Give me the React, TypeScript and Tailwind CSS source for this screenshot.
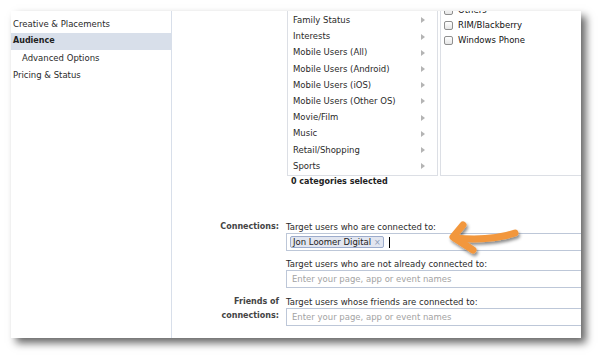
import React from 'react';

const categories = [
  'Family Status',
  'Interests',
  'Mobile Users (All)',
  'Mobile Users (Android)',
  'Mobile Users (iOS)',
  'Mobile Users (Other OS)',
  'Movie/Film',
  'Music',
  'Retail/Shopping',
  'Sports',
];

const mobileOs = ['Others', 'RIM/Blackberry', 'Windows Phone'];

const Caret = () => (
  <svg width="4" height="6" viewBox="0 0 4 6" className="shrink-0">
    <path d="M0 0 L4 3 L0 6 Z" fill="#b4b4b4" />
  </svg>
);

const Checkbox = () => (
  <span className="w-[9px] h-[9px] shrink-0 rounded-[2px] border border-[#8f8f8f] bg-gradient-to-b from-white to-[#e6e6e6]" />
);

const TextField = ({ placeholder }: { placeholder: string }) => (
  <div className="w-[320px] h-[18px] border border-[#bdc7d8] bg-white flex items-center pl-[5px] text-[#a3a3a3] leading-[12px]">
    {placeholder}
  </div>
);

const Arrow = () => (
  <svg
    width="84"
    height="42"
    viewBox="0 0 84 42"
    className="absolute left-[431px] top-[209px]"
  >
    <defs>
      <filter id="sh" x="-20%" y="-30%" width="150%" height="180%">
        <feDropShadow dx="1.5" dy="2.5" stdDeviation="1.4" floodColor="#000" floodOpacity="0.45" />
      </filter>
    </defs>
    <g
      filter="url(#sh)"
      fill="none"
      stroke="#f2973d"
      strokeWidth="7"
      strokeLinecap="round"
      strokeLinejoin="round"
    >
      <path d="M13 18 C 35 20, 55 19, 73 13" />
      <path d="M21 5 L 11 17 L 31 30" />
    </g>
  </svg>
);

export default function App() {
  return (
    <div className="w-[600px] h-[357px] bg-white overflow-hidden pt-[11px] pl-[11px] font-['DejaVu_Sans',sans-serif] text-[8.5px] text-[#2a2a2a]">
      <div className="relative w-[570px] h-[327px] bg-white shadow-[5px_5px_8px_rgba(0,0,0,0.6)] flex">
        {/* Sidebar */}
        <div className="w-[161px] shrink-0 border-r border-[#d8dfea] pt-[4.5px]">
          <div className="h-[17px] flex items-center pl-[2px]">Creative &amp; Placements</div>
          <div className="h-[17px] flex items-center pl-[2px] bg-[#d8dfea] font-bold text-[8px] text-[#222]">
            Audience
          </div>
          <div className="h-[17px] flex items-center pl-[11px]">Advanced Options</div>
          <div className="h-[17px] flex items-center pl-[2px]">Pricing &amp; Status</div>
        </div>

        {/* Main */}
        <div className="flex-1 overflow-hidden">
          <div className="flex -mt-[17px]">
            <div className="w-[115px] shrink-0" />
            <div className="flex-1">
              <div className="flex">
                <div className="w-[151px] shrink-0 border border-[#dcdfe5] pt-[17.4px] pb-[1px]">
                  {categories.map((c) => (
                    <div key={c} className="h-[16.2px] flex items-center justify-between pl-[5px] pr-[12px]">
                      <span>{c}</span>
                      <Caret />
                    </div>
                  ))}
                </div>
                <div className="w-[200px] shrink-0 ml-[2px] border border-[#dcdfe5] pt-[8px]">
                  {mobileOs.map((o) => (
                    <div key={o} className="h-[15px] flex items-center pl-[3px] gap-[5px] text-[#111]">
                      <Checkbox />
                      <span>{o}</span>
                    </div>
                  ))}
                </div>
              </div>
              <div className="leading-[12px] font-bold text-[8px] pl-[4px] text-[#222]">0 categories selected</div>
            </div>
          </div>

          {/* Connections */}
          <div className="flex mt-[32px]">
            <div className="w-[114px] shrink-0 pr-[7px] text-right font-bold text-[8px] leading-[14px] text-[#444]">
              Connections:
            </div>
            <div className="flex-1">
              <div className="leading-[12px] pt-[1px]">Target users who are connected to:</div>
              <div className="w-[320px] h-[18px] border border-[#bdc7d8] bg-white flex items-center pl-[3px]">
                <span className="h-[12px] flex items-center gap-[3px] px-[2px] rounded-[2px] border border-[#9daccc] bg-[#e2e6f0] leading-[9px] text-[#222]">
                  Jon Loomer Digital
                  <span className="text-[#8d9bb8] text-[8px] leading-[9px]">×</span>
                </span>
                <span className="ml-[5px] w-[1px] h-[11px] bg-black" />
              </div>
            </div>
          </div>

          <div className="flex mt-[7px]">
            <div className="w-[114px] shrink-0" />
            <div className="flex-1">
              <div className="leading-[12px]">Target users who are not already connected to:</div>
              <TextField placeholder="Enter your page, app or event names" />
            </div>
          </div>

          <div className="flex mt-[8px]">
            <div className="w-[114px] shrink-0 pr-[7px] text-right font-bold text-[8px] leading-[14px] -mt-[1px] text-[#444]">
              Friends of
              <br />
              connections:
            </div>
            <div className="flex-1">
              <div className="leading-[12px]">Target users whose friends are connected to:</div>
              <TextField placeholder="Enter your page, app or event names" />
            </div>
          </div>
        </div>

        <Arrow />
      </div>
    </div>
  );
}
